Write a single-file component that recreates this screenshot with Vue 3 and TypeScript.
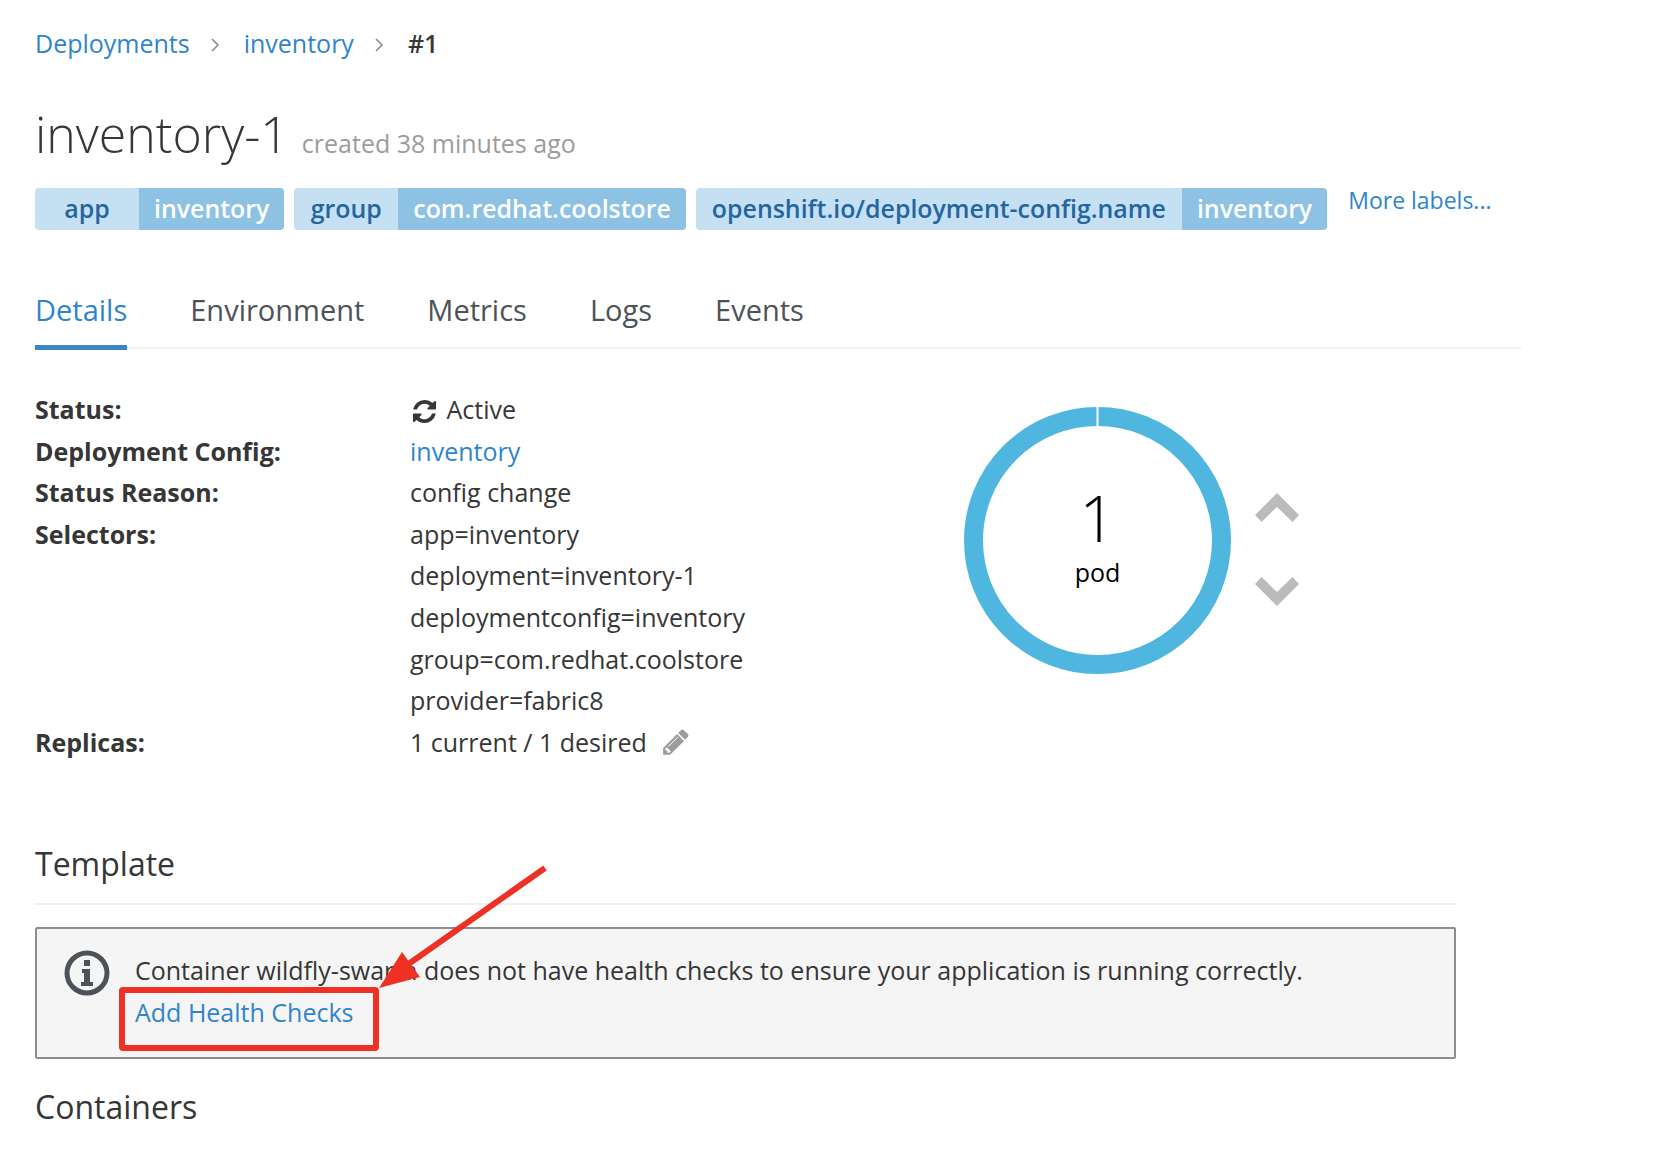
<script setup lang="ts">
interface Label {
  key: string
  value: string
}

interface Row {
  name: string
  values: string[]
}

const labels: Label[] = [
  { key: 'app', value: 'inventory' },
  { key: 'group', value: 'com.redhat.coolstore' },
  { key: 'openshift.io/deployment-config.name', value: 'inventory' }
]

const tabs: string[] = ['Details', 'Environment', 'Metrics', 'Logs', 'Events']

const selectors: Row = {
  name: 'Selectors:',
  values: [
    'app=inventory',
    'deployment=inventory-1',
    'deploymentconfig=inventory',
    'group=com.redhat.coolstore',
    'provider=fabric8'
  ]
}
</script>

<template>
  <div class="page">
    <!-- Breadcrumb -->
    <nav class="crumbs">
      <a class="link">Deployments</a>
      <svg class="sep" viewBox="0 0 10 18"><path d="M2 3l6 6-6 6" /></svg>
      <a class="link">inventory</a>
      <svg class="sep" viewBox="0 0 10 18"><path d="M2 3l6 6-6 6" /></svg>
      <strong>#1</strong>
    </nav>

    <!-- Title -->
    <h1 class="title">inventory-1 <small>created 38 minutes ago</small></h1>

    <div class="labels">
      <div v-for="l in labels" :key="l.key" class="label">
        <span class="label-key">{{ l.key }}</span>
        <span class="label-value">{{ l.value }}</span>
      </div>
      <a class="link more">More labels...</a>
    </div>

    <!-- Tabs -->
    <ul class="tabs">
      <li v-for="(t, i) in tabs" :key="t" :class="{ active: i === 0 }">{{ t }}</li>
    </ul>

    <!-- Details + pod donut -->
    <section class="details">
      <dl class="rows">
        <dt>Status:</dt>
        <dd>
          <svg class="sync" viewBox="0 0 1792 1792">
            <path d="M1639 1056q0 5-1 7-64 268-268 434.500t-478 166.500q-146 0-282.500-55t-243.500-157l-129 129q-19 19-45 19t-45-19-19-45v-448q0-26 19-45t45-19h448q26 0 45 19t19 45-19 45l-137 137q71 66 161 102t187 36q134 0 250-65t186-179q11-17 53-117 8-23 30-23h192q13 0 22.500 9.500t9.500 22.500zm25-800v448q0 26-19 45t-45 19h-448q-26 0-45-19t-19-45 19-45l138-138q-148-137-349-137-134 0-250 65t-186 179q-11 17-53 117-8 23-30 23h-199q-13 0-22.500-9.500t-9.500-22.500v-7q65-268 270-434.500t480-166.500q146 0 284 55.500t245 156.500l130-129q19-19 45-19t45 19 19 45z" />
          </svg>
          Active
        </dd>
        <dt>Deployment Config:</dt>
        <dd><a class="link">inventory</a></dd>
        <dt>Status Reason:</dt>
        <dd>config change</dd>
        <dt>{{ selectors.name }}</dt>
        <dd>
          <div v-for="s in selectors.values" :key="s">{{ s }}</div>
        </dd>
        <dt>Replicas:</dt>
        <dd>
          1 current / 1 desired
          <svg class="pencil" viewBox="0 0 1792 1792">
            <path d="M491 1536l91-91-235-235-91 91v107h128v128h107zm523-928q0-22-22-22-10 0-17 7l-542 542q-7 7-7 17 0 22 22 22 10 0 17-7l542-542q7-7 7-17zm-54-192l416 416-832 832h-416v-416zm683 96q0 53-37 90l-166 166-416-416 166-165q36-38 90-38 53 0 91 38l235 234q37 39 37 91z" />
          </svg>
        </dd>
      </dl>

      <svg class="donut" viewBox="0 0 267 267">
        <circle cx="133.500" cy="133.500" r="124" />
        <line x1="133.500" y1="0" x2="133.500" y2="20" />
        <text class="count" x="133.500" y="135" text-anchor="middle">1</text>
        <text class="unit" x="133.500" y="175" text-anchor="middle">pod</text>
      </svg>

      <div class="scale">
        <svg viewBox="0 0 46 31"><path d="M23 1l22 22-6.500 7L23 15 7.500 30 1 23z" /></svg>
        <svg viewBox="0 0 46 31"><path d="M23 30L1 8l6.500-7L23 16 38.500 1 45 8z" /></svg>
      </div>
    </section>

    <!-- Template -->
    <h2 class="heading template">Template</h2>
    <div class="alert">
      <svg class="info" viewBox="0 0 46 46">
        <circle cx="23" cy="23" r="20" />
        <path class="glyph" d="M20 10h6v6h-6zM18 19h8v13h3v4H17v-4h3v-9h-2z" />
      </svg>
      <div class="alert-text">
        <div>Container wildfly-swarm does not have health checks to ensure your application is running correctly.</div>
        <a class="link">Add Health Checks</a>
      </div>
    </div>

    <h2 class="heading containers">Containers</h2>

    <!-- Red annotation painted over the screenshot -->
    <svg class="annotation" viewBox="0 0 1672 1168">
      <rect x="122" y="990" width="254" height="58" rx="1" />
      <line x1="545" y1="868" x2="400" y2="970" />
      <path class="tip" d="M379 988L402 952L420 977z" />
    </svg>
  </div>
</template>

<style>
body {
  background: #fff;
}
</style>

<style scoped>
.page {
  position: relative;
  width: 1672px;
  height: 1168px;
  box-sizing: border-box;
  padding: 23px 0 0 35px;
  overflow: hidden;
  font-family: "Open Sans", "Noto Sans", sans-serif;
  font-size: 25px;
  line-height: 41.6px;
  color: #363636;
  background: #fff;
}

.link {
  color: #2f85cb;
}

/* ===== Breadcrumb ===== */
.crumbs {
  display: flex;
  align-items: center;
  height: 42px;
}

.crumbs strong {
  font-weight: 600;
}

.sep {
  width: 10px;
  height: 18px;
  margin: 2px 24px 0 20px;
}

.sep path {
  fill: none;
  stroke: #8b8d8f;
  stroke-width: 1.6;
}

/* ===== Title ===== */
.title {
  margin: 36px 0 0;
  height: 66px;
  font-size: 50px;
  line-height: 66px;
  font-weight: 300;
  color: #363636;
}

.title small {
  font-size: 25px;
  font-weight: 400;
  color: #9c9c9c;
}

/* ===== Labels ===== */
.labels {
  display: flex;
  align-items: flex-start;
  gap: 10px;
  margin-top: 21px;
}

.label {
  display: flex;
  height: 42px;
  font-size: 24.9px;
  line-height: 41px;
  font-weight: 600;
  border-radius: 4px;
  overflow: hidden;
}

.label-key {
  min-width: 72px;
  padding: 0 16px;
  text-align: center;
  background: #c5e0f3;
  color: #24659e;
}

.label-value {
  padding: 0 15px;
  background: #8dc2e4;
  color: #fff;
}

.more {
  margin-left: 11px;
  font-size: 23px;
  line-height: 24px;
}

/* ===== Tabs ===== */
.tabs {
  display: flex;
  gap: 63px;
  width: 1486px;
  height: 70px;
  margin: 47px 0 0;
  padding: 0;
  list-style: none;
  font-size: 29px;
  line-height: 66px;
  color: #4d5258;
  border-bottom: 2px solid #f1f1f1;
  box-sizing: content-box;
}

.tabs .active {
  height: 68px;
  color: #2f85cb;
  border-bottom: 5px solid #3a87c8;
}

/* ===== Details ===== */
.details {
  display: flex;
  align-items: flex-start;
  margin-top: 40px;
}

.rows {
  display: grid;
  grid-template-columns: 375px 1fr;
  width: 929px;
  margin: 0;
}

.rows dt {
  font-weight: 700;
}

.rows dd {
  margin: 0;
}

.sync {
  width: 27px;
  height: 27px;
  margin-left: 1px;
  margin-right: 2px;
  vertical-align: -6px;
  fill: #363636;
}

.pencil {
  width: 30px;
  height: 30px;
  margin-left: 8px;
  vertical-align: -5px;
  fill: #9c9c9c;
}

.donut {
  flex: none;
  width: 267px;
  height: 267px;
  margin-top: 18px;
}

.donut circle {
  fill: none;
  stroke: #4fb6e0;
  stroke-width: 19;
}

.donut line {
  stroke: #fff;
  stroke-width: 2;
}

.donut .count {
  font-size: 64px;
  font-weight: 300;
  fill: #000;
}

.donut .unit {
  font-size: 25px;
  fill: #000;
}

.scale {
  display: flex;
  flex-direction: column;
  gap: 53px;
  margin: 103px 0 0 23px;
}

.scale svg {
  display: block;
  width: 46px;
  height: 31px;
  fill: #bbb;
}

/* ===== Template ===== */
.heading {
  margin: 0;
  font-size: 32px;
  line-height: 44px;
  font-weight: 400;
}

.template {
  width: 1421px;
  margin-top: 79px;
  padding-bottom: 17px;
  border-bottom: 2px solid #f1f1f1;
}

.alert {
  display: flex;
  box-sizing: border-box;
  width: 1421px;
  height: 132px;
  margin-top: 22px;
  padding: 21px 0 0 27px;
  background: #f5f5f5;
  border: 2px solid #8b8d8f;
  border-radius: 2px;
}

.info {
  flex: none;
  width: 46px;
  height: 46px;
  margin-right: 25px;
}

.info circle {
  fill: none;
  stroke: #4d5258;
  stroke-width: 5;
}

.info .glyph {
  fill: #4d5258;
}

.containers {
  margin-top: 26px;
}

/* ===== Annotation ===== */
.annotation {
  position: absolute;
  top: 0;
  left: 0;
  width: 1672px;
  height: 1168px;
  pointer-events: none;
}

.annotation rect {
  fill: none;
  stroke: #ee3124;
  stroke-width: 6;
}

.annotation line {
  stroke: #ee3124;
  stroke-width: 6;
}

.annotation .tip {
  fill: #ee3124;
}
</style>
